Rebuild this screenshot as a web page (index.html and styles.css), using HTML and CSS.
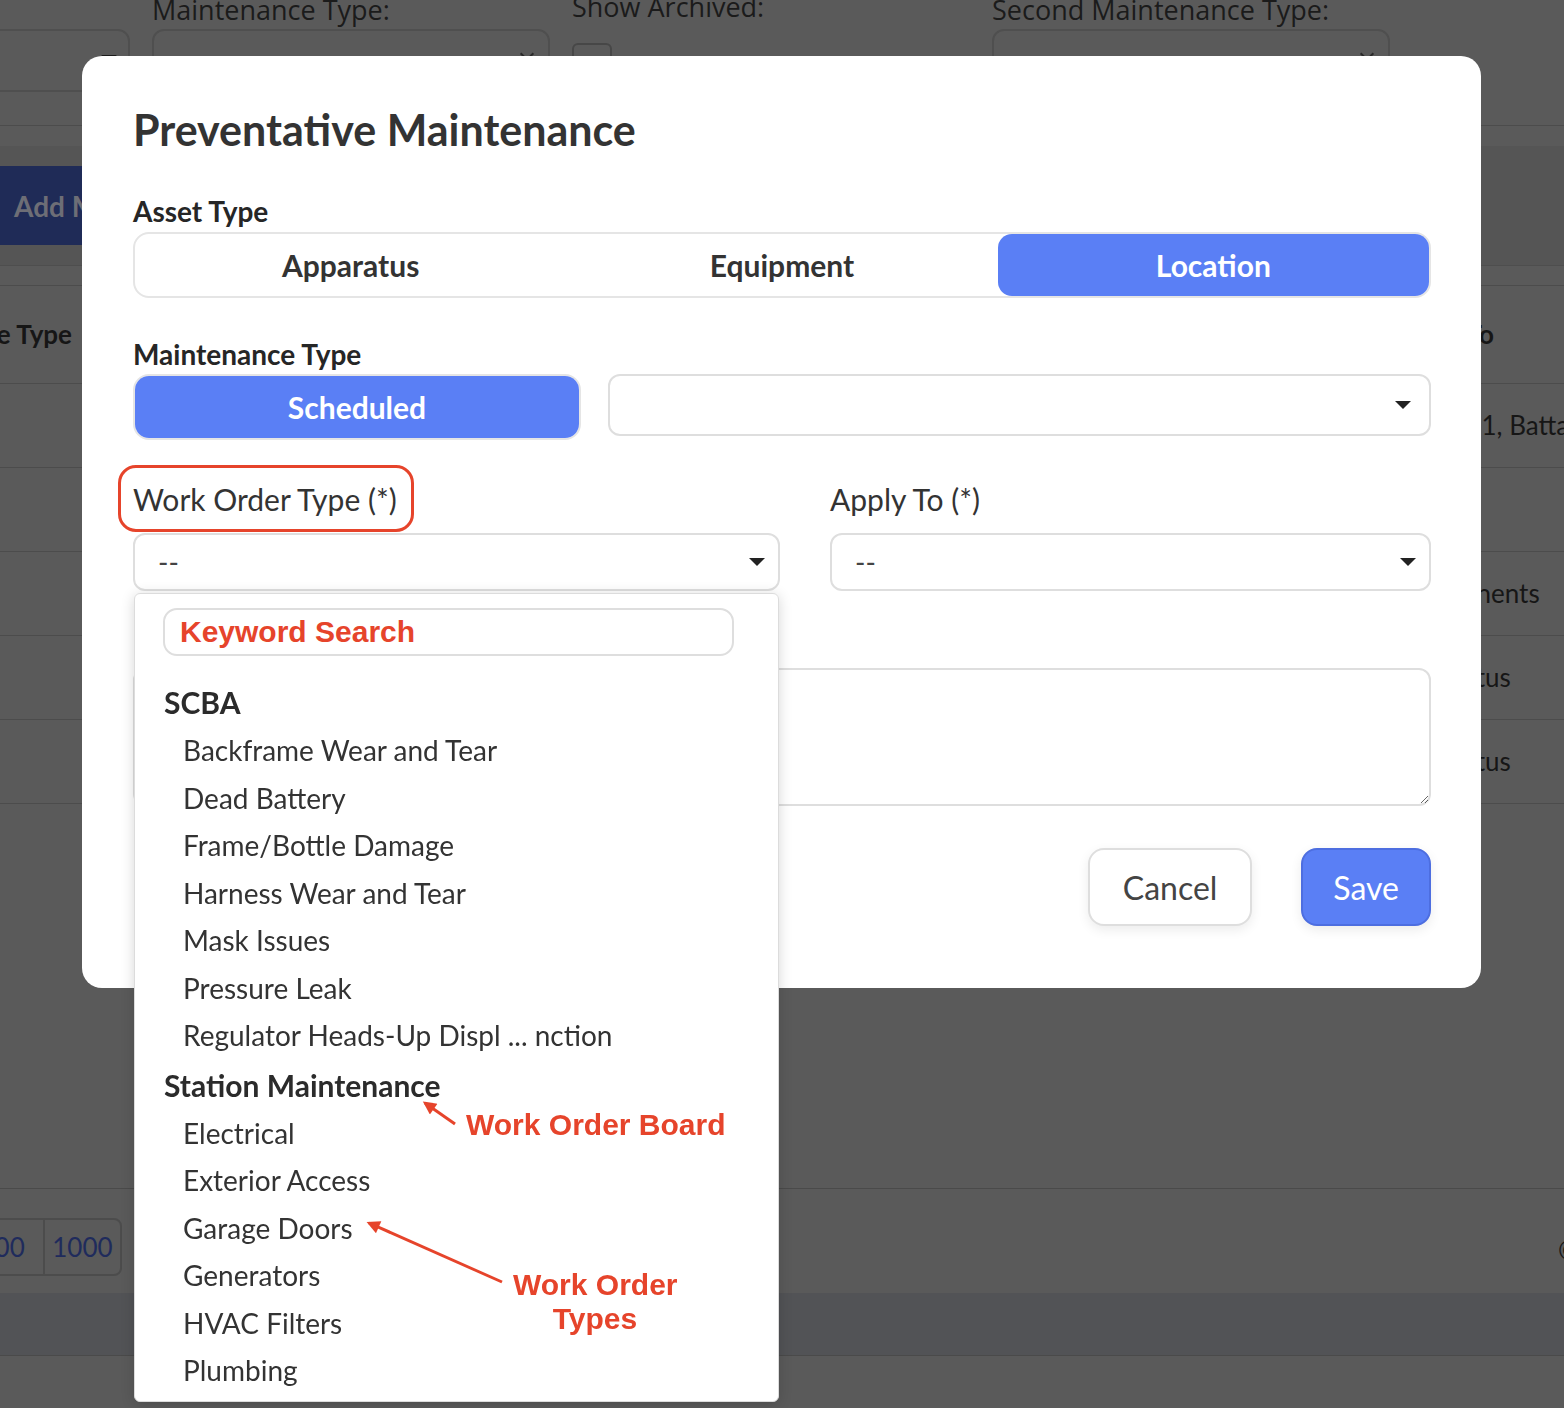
FILE: index.html
```html
<!DOCTYPE html>
<html lang="en">
<head>
  <meta charset="utf-8">
  <title>Maintenance Schedules</title>
  <link rel="stylesheet" href="styles.css">
</head>
<body>
  <!-- schedule list, shown dimmed while the dialog is open -->
  <div class="page">
    <div class="filters">
      <div class="filter">
        <label>Status:</label>
        <div class="dim-select"><span class="dim-caret"></span></div>
      </div>
      <div class="filter">
        <label>Maintenance Type:</label>
        <div class="dim-select"><span class="dim-chevron"></span></div>
      </div>
      <div class="filter filter-check">
        <label>Show Archived:</label>
        <div class="dim-check"></div>
      </div>
      <div class="filter">
        <label>Second Maintenance Type:</label>
        <div class="dim-select"><span class="dim-chevron"></span></div>
      </div>
    </div>

    <div class="toolbar">
      <div class="toolbar-band">
        <button class="dim-btn">Add Maintenance</button>
      </div>
    </div>

    <div class="table">
      <div class="row head">
        <div class="cell-type"><span>Maintenance Type</span></div>
        <div></div>
        <div class="cell-apply">Apply To</div>
      </div>
      <div class="row">
        <div class="cell-type"></div>
        <div></div>
        <div class="cell-apply">Station 1, Battalion 2</div>
      </div>
      <div class="row">
        <div class="cell-type"></div>
        <div></div>
        <div class="cell-apply"></div>
      </div>
      <div class="row">
        <div class="cell-type"></div>
        <div></div>
        <div class="cell-apply">Components</div>
      </div>
      <div class="row">
        <div class="cell-type"></div>
        <div></div>
        <div class="cell-apply">Apparatus</div>
      </div>
      <div class="row">
        <div class="cell-type"></div>
        <div></div>
        <div class="cell-apply">Apparatus</div>
      </div>
    </div>

    <div class="pager-row">
      <div class="pager">
        <span class="page-size">100</span>
        <span class="page-size">1000</span>
      </div>
      <span class="copyright">&copy; 2024</span>
    </div>
    <div class="footer"></div>
  </div>

  <!-- new schedule dialog -->
  <div class="modal">
    <h1 class="modal-title">Preventative Maintenance</h1>

    <div class="field-label first">Asset Type</div>
    <div class="segmented seg-3">
      <button class="seg">Apparatus</button>
      <button class="seg">Equipment</button>
      <button class="seg active">Location</button>
    </div>

    <div class="field-label">Maintenance Type</div>
    <div class="maint-row">
      <div class="segmented">
        <button class="seg active">Scheduled</button>
      </div>
      <div class="select select-tall">
        <span class="value"></span>
        <span class="caret"></span>
      </div>
    </div>

    <div class="order-row">
      <div class="field">
        <label class="input-label">Work Order Type (*)</label>
        <div class="callout-box"></div>
        <div class="select-wrap">
          <div class="select">
            <span class="value">--</span>
            <span class="caret"></span>
          </div>

          <div class="dropdown">
            <input class="search" type="text" placeholder="Keyword Search">
            <div class="group">SCBA</div>
            <div class="option">Backframe Wear and Tear</div>
            <div class="option">Dead Battery</div>
            <div class="option">Frame/Bottle Damage</div>
            <div class="option">Harness Wear and Tear</div>
            <div class="option">Mask Issues</div>
            <div class="option">Pressure Leak</div>
            <div class="option">Regulator Heads-Up Displ ... nction</div>
            <div class="group">Station Maintenance</div>
            <div class="option">Electrical</div>
            <div class="option">Exterior Access</div>
            <div class="option">Garage Doors</div>
            <div class="option">Generators</div>
            <div class="option">HVAC Filters</div>
            <div class="option">Plumbing</div>

            <svg class="pointers" width="643" height="807" viewBox="0 0 643 807">
              <defs>
                <marker id="tip" viewBox="0 0 10 10" refX="8" refY="5" markerWidth="5" markerHeight="4.4" orient="auto">
                  <path d="M0 0 L10 5 L0 10 z" fill="#e6442b"/>
                </marker>
              </defs>
              <line x1="320" y1="530" x2="290" y2="509" stroke="#e6442b" stroke-width="3" marker-end="url(#tip)"/>
              <line x1="367" y1="688" x2="234" y2="629" stroke="#e6442b" stroke-width="3" marker-end="url(#tip)"/>
            </svg>
            <span class="note note-board">Work Order Board</span>
            <span class="note note-types">Work Order<br>Types</span>
          </div>
        </div>
      </div>

      <div class="field">
        <label class="input-label">Apply To (*)</label>
        <div class="select">
          <span class="value">--</span>
          <span class="caret"></span>
        </div>
      </div>
    </div>

    <textarea class="notes"></textarea>

    <div class="actions">
      <button class="btn btn-cancel">Cancel</button>
      <button class="btn btn-save">Save</button>
    </div>
  </div>
</body>
</html>
```

FILE: styles.css
```css
html, body {
  margin: 0;
  height: 100%;
}

body {
  background-color: #5a5a5a;
  font-family: Lato, 'Noto Sans', sans-serif;
  color: #161616;
  overflow: hidden;
  -webkit-font-smoothing: antialiased;
}

button {
  font: inherit;
}

/* ---- page under the dialog (already dimmed colours) ---- */

.page {
  margin-top: -8px;
}

.filters {
  display: grid;
  grid-template-columns: repeat(4, 398px);
  column-gap: 22px;
  margin-left: -268px;
  height: 134px;
  box-sizing: border-box;
  border-bottom: 1px solid #4c4c4c;
}

.filter label {
  display: block;
  font-family: 'Open Sans', sans-serif;
  font-size: 27px;
  line-height: 35px;
  color: #1b1b1b;
  white-space: nowrap;
}

.filter-check label {
  margin-top: -3px;
}

.dim-select {
  position: relative;
  height: 63px;
  margin-top: 2px;
  box-sizing: border-box;
  border: 2px solid #4f4f4f;
  border-radius: 12px;
}

.dim-caret {
  position: absolute;
  right: 11px;
  top: 24px;
  border-left: 8px solid transparent;
  border-right: 8px solid transparent;
  border-top: 6px solid #1b1b1b;
}

.dim-chevron {
  position: absolute;
  right: 16px;
  top: 18px;
  width: 8px;
  height: 8px;
  border-right: 2px solid #2a2a2a;
  border-bottom: 2px solid #2a2a2a;
  transform: rotate(45deg);
}

.dim-check {
  width: 40px;
  height: 40px;
  margin-top: 19px;
  box-sizing: border-box;
  border: 2px solid #474747;
  border-radius: 6px;
}

.toolbar {
  padding-top: 20px;
}

.toolbar-band {
  display: flex;
  align-items: center;
  height: 120px;
  box-sizing: border-box;
  background-color: #555555;
  border-bottom: 1px solid #4e4e4e;
}

.dim-btn {
  height: 79px;
  padding: 0 30px 0 14px;
  border: none;
  border-radius: 0 8px 8px 0;
  background-color: #1f2b57;
  color: #6d6e76;
  font-size: 28px;
  font-weight: 700;
  white-space: nowrap;
}

.table {
  margin-top: 19px;
  border-top: 1px solid #4c4c4c;
}

.row {
  display: grid;
  grid-template-columns: 72px 1fr 170px;
  align-items: center;
  height: 84px;
  box-sizing: border-box;
  border-bottom: 1px solid #4c4c4c;
  font-size: 26px;
  line-height: 31px;
  white-space: nowrap;
}

.row.head {
  height: 98px;
  font-weight: 700;
}

/* long header text hangs off to the left, only its end is on screen */
.cell-type {
  display: flex;
  justify-content: flex-end;
}

.pager-row {
  display: flex;
  align-items: flex-start;
  justify-content: space-between;
  margin-top: 384px;
  height: 105px;
  box-sizing: border-box;
  padding-top: 29px;
  border-top: 1px solid #4a4a4a;
}

.pager {
  display: flex;
  margin-left: -30px;
  border: 2px solid #4c4c4c;
  border-radius: 8px;
}

.page-size {
  padding: 0 7.5px;
  font-size: 26px;
  line-height: 54px;
  color: #1f2b5c;
}

.page-size:first-child {
  padding-right: 18px;
}

.page-size + .page-size {
  border-left: 2px solid #4c4c4c;
}

.copyright {
  width: 100px;
  margin-right: -94px;
  margin-top: 16px;
  font-size: 26px;
  white-space: nowrap;
}

.footer {
  height: 63px;
  box-sizing: border-box;
  background-color: #525356;
  border-bottom: 1px solid #4a4a4a;
}

/* ---- dialog ---- */

.modal {
  position: fixed;
  left: 82px;
  top: 56px;
  width: 1399px;
  box-sizing: border-box;
  padding: 50px 50px 62px 51px;
  background-color: #fff;
  border-radius: 20px;
  color: #333;
}

.modal-title {
  margin: 0;
  font-size: 43px;
  line-height: 48px;
  font-weight: 700;
  color: #333;
}

.field-label {
  margin-top: 41px;
  font-size: 28px;
  line-height: 31px;
  font-weight: 700;
  color: #262626;
}

.field-label.first {
  margin-top: 42px;
}

.segmented {
  display: flex;
  height: 66px;
  box-sizing: border-box;
  border: 2px solid #e5e5e5;
  border-radius: 16px;
  margin-top: 5px;
}

.seg {
  flex: 1;
  border: none;
  border-radius: 14px;
  background: none;
  font-size: 30px;
  font-weight: 700;
  color: #333;
  padding: 0;
}

.seg.active {
  background-color: #5a7ff5;
  color: #fff;
}

.maint-row {
  display: grid;
  grid-template-columns: 448px 1fr;
  column-gap: 27px;
  align-items: start;
  margin-top: 4px;
}

.maint-row .segmented {
  margin-top: 0;
}

.select {
  display: flex;
  align-items: center;
  justify-content: space-between;
  height: 58px;
  box-sizing: border-box;
  padding: 0 13px 0 23px;
  border: 2px solid #dedede;
  border-radius: 12px;
  background-color: #fff;
}

.select-tall {
  height: 62px;
  padding-right: 18px;
}

.select .value {
  font-size: 28px;
  color: #444;
}

.caret {
  border-left: 8px solid transparent;
  border-right: 8px solid transparent;
  border-top: 8px solid #222;
}

.order-row {
  display: grid;
  grid-template-columns: 647px 1fr;
  column-gap: 50px;
  margin-top: 42px;
}

.field {
  position: relative;
}

.input-label {
  display: block;
  margin-bottom: 17px;
  font-size: 30px;
  line-height: 34px;
  color: #333;
}

/* red highlight drawn round the field label */
.callout-box {
  position: absolute;
  left: -15px;
  top: -17px;
  width: 296px;
  height: 67px;
  box-sizing: border-box;
  border: 3px solid #e6442b;
  border-radius: 18px;
}

.select-wrap {
  position: relative;
}

.dropdown {
  position: absolute;
  z-index: 2;
  top: calc(100% + 2px);
  left: 1px;
  right: 1px;
  padding: 14px 0 6px;
  background-color: #fff;
  border: 1px solid #dcdcdc;
  border-radius: 6px;
  box-shadow: 0 2px 14px rgba(0, 0, 0, 0.16);
}

.search {
  display: block;
  width: 571px;
  height: 48px;
  margin-left: 28px;
  box-sizing: border-box;
  padding: 0 15px;
  border: 2px solid #dedede;
  border-radius: 14px;
  font-family: 'Liberation Sans', Arial, sans-serif;
  font-size: 30px;
  font-weight: 700;
  outline: none;
}

.search::placeholder {
  color: #e6442b;
  opacity: 1;
}

.group {
  padding-left: 29px;
  font-size: 30px;
  line-height: 50px;
  font-weight: 700;
  color: #2b2b2b;
}

.search + .group {
  margin-top: 21px;
}

.option {
  padding-left: 48px;
  font-size: 28px;
  line-height: 47.5px;
  color: #333;
  white-space: nowrap;
}

.pointers {
  position: absolute;
  left: 0;
  top: 0;
  pointer-events: none;
}

.note {
  position: absolute;
  font-family: 'Liberation Sans', Arial, sans-serif;
  font-size: 30px;
  line-height: 34px;
  font-weight: 700;
  color: #e6442b;
  white-space: nowrap;
}

.note-board {
  left: 331px;
  top: 514px;
}

.note-types {
  left: 378px;
  top: 674px;
  width: 164px;
  text-align: center;
}

.notes {
  display: block;
  width: 100%;
  height: 138px;
  margin-top: 77px;
  box-sizing: border-box;
  border: 2px solid #dedede;
  border-radius: 12px;
  font: inherit;
  resize: vertical;
}

.actions {
  display: flex;
  justify-content: flex-end;
  gap: 49px;
  margin-top: 42px;
}

.btn {
  height: 78px;
  border-radius: 16px;
  font-size: 32px;
}

.btn-cancel {
  padding: 0 33px;
  background-color: #fff;
  border: 2px solid #dedede;
  color: #444;
  box-shadow: 0 4px 12px rgba(0, 0, 0, 0.08);
}

.btn-save {
  padding: 0 30px;
  background-color: #5a7ff5;
  border: 2px solid #4d6ee0;
  color: #fff;
  box-shadow: 0 4px 12px rgba(0, 0, 0, 0.08);
}
```
